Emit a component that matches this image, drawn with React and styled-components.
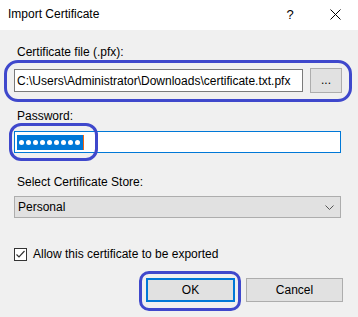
import React from 'react';
import styled, { createGlobalStyle } from 'styled-components';

const GlobalStyle = createGlobalStyle`
  html, body {
    margin: 0;
    padding: 0;
    background: #f0f0f0;
  }
  body {
    font-family: 'Liberation Sans', Arial, sans-serif;
    font-size: 12px;
    color: #000;
  }
`;

const Dialog = styled.div`
  width: 358px;
  height: 317px;
  background: #f0f0f0;
  overflow: hidden;
`;

const TitleBar = styled.div`
  height: 30px;
  background: #fff;
  display: flex;
  align-items: center;
  padding-left: 8px;
`;

const Title = styled.div`
  flex: 1;
  font-size: 12px;
  line-height: 16px;
  margin-top: -2px;
`;

const TitleButton = styled.div`
  width: ${(p) => p.w}px;
  display: flex;
  justify-content: center;
  align-items: center;
  font-size: 13px;
  margin-top: -2px;
`;

const Body = styled.div`
  padding: 0 17px 0 14px;
  display: flex;
  flex-direction: column;
`;

const Label = styled.div`
  padding-left: 3px;
  line-height: 16px;
  margin-top: ${(p) => p.top}px;
  margin-bottom: ${(p) => p.bottom}px;
`;

const Marked = styled.div`
  position: relative;
  &::after {
    content: '';
    position: absolute;
    top: ${(p) => p.t}px;
    left: ${(p) => p.l}px;
    right: ${(p) => p.r}px;
    bottom: ${(p) => p.b}px;
    border: 3px solid #3f48cc;
    border-radius: ${(p) => p.radius}px;
    pointer-events: none;
  }
`;

const FileRow = styled.div`
  display: flex;
  align-items: center;
  gap: 7px;
  margin-right: -1px;
`;

const TextBox = styled.div`
  box-sizing: border-box;
  height: ${(p) => p.h}px;
  flex: ${(p) => (p.grow ? '1' : 'none')};
  background: #fff;
  border: 1px solid ${(p) => (p.focused ? '#0078d7' : '#7a7a7a')};
  display: flex;
  align-items: center;
  padding-left: 2px;
  white-space: nowrap;
`;

const BrowseButton = styled.div`
  box-sizing: border-box;
  width: 32px;
  height: 25px;
  background: #e1e1e1;
  border: 1px solid #adadad;
  display: flex;
  align-items: center;
  justify-content: center;
  padding-bottom: 2px;
`;

const Selection = styled.div`
  height: 15px;
  background: #0078d7;
  display: flex;
  align-items: center;
  gap: 2px;
  padding: 0 3px 0 2px;
  border-right: 1px solid #f7630c;
`;

const Dot = styled.span`
  width: 5px;
  height: 5px;
  border-radius: 50%;
  background: #fff;
`;

const Select = styled.div`
  box-sizing: border-box;
  height: 22px;
  background: #e1e1e1;
  border: 1px solid #adadad;
  display: flex;
  align-items: center;
  justify-content: space-between;
  padding: 0 6px 0 3px;
`;

const CheckRow = styled.div`
  display: flex;
  align-items: center;
  gap: 6px;
  margin-top: 29px;
`;

const CheckBox = styled.div`
  box-sizing: border-box;
  width: 13px;
  height: 13px;
  border: 1px solid #333;
  background: #fff;
  display: flex;
  align-items: center;
  justify-content: center;
`;

const ButtonRow = styled.div`
  display: flex;
  justify-content: flex-end;
  gap: 11px;
  margin-top: 17px;
  margin-right: -2px;
`;

const Button = styled.div`
  box-sizing: border-box;
  width: ${(p) => p.w}px;
  height: 24px;
  background: #e1e1e1;
  border: ${(p) => (p.primary ? '2px solid #0078d7' : '1px solid #adadad')};
  display: flex;
  align-items: center;
  justify-content: center;
`;

const dots = Array.from({ length: 9 });

export default function App() {
  return (
    <>
      <GlobalStyle />
      <Dialog>
        <TitleBar>
          <Title>Import Certificate</Title>
          <TitleButton w={44}>?</TitleButton>
          <TitleButton w={46}>
            <svg width="11" height="11" viewBox="0 0 11 11">
              <path d="M0.5 0.5 L10.5 10.5 M10.5 0.5 L0.5 10.5" stroke="#000" strokeWidth="1" />
            </svg>
          </TitleButton>
        </TitleBar>
        <Body>
          <Label top={14} bottom={8}>Certificate file (.pfx):</Label>
          <Marked t={-8} l={-10} r={-11} b={-9} radius={14}>
            <FileRow>
              <TextBox h={23} grow>C:\Users\Administrator\Downloads\certificate.txt.pfx</TextBox>
              <BrowseButton>...</BrowseButton>
            </FileRow>
          </Marked>
          <Label top={15} bottom={7}>Password:</Label>
          <TextBox h={22} focused>
            <Marked t={-12} l={-8} r={-14} b={-11} radius={12}>
              <Selection>
                {dots.map((_, i) => (
                  <Dot key={i} />
                ))}
              </Selection>
            </Marked>
          </TextBox>
          <Label top={21} bottom={6}>Select Certificate Store:</Label>
          <Select>
            <span>Personal</span>
            <svg width="9" height="5" viewBox="0 0 9 5">
              <path d="M0.5 0.5 L4.5 4.5 L8.5 0.5" fill="none" stroke="#555" strokeWidth="1" />
            </svg>
          </Select>
          <CheckRow>
            <CheckBox>
              <svg width="11" height="11" viewBox="0 0 11 11">
                <path d="M1.5 5.5 L4 8 L9.5 2" fill="none" stroke="#333" strokeWidth="1.2" />
              </svg>
            </CheckBox>
            <span>Allow this certificate to be exported</span>
          </CheckRow>
          <ButtonRow>
            <Marked t={-7} l={-7} r={-6} b={-9} radius={10}>
              <Button w={89} primary>OK</Button>
            </Marked>
            <Button w={97}>Cancel</Button>
          </ButtonRow>
        </Body>
      </Dialog>
    </>
  );
}
